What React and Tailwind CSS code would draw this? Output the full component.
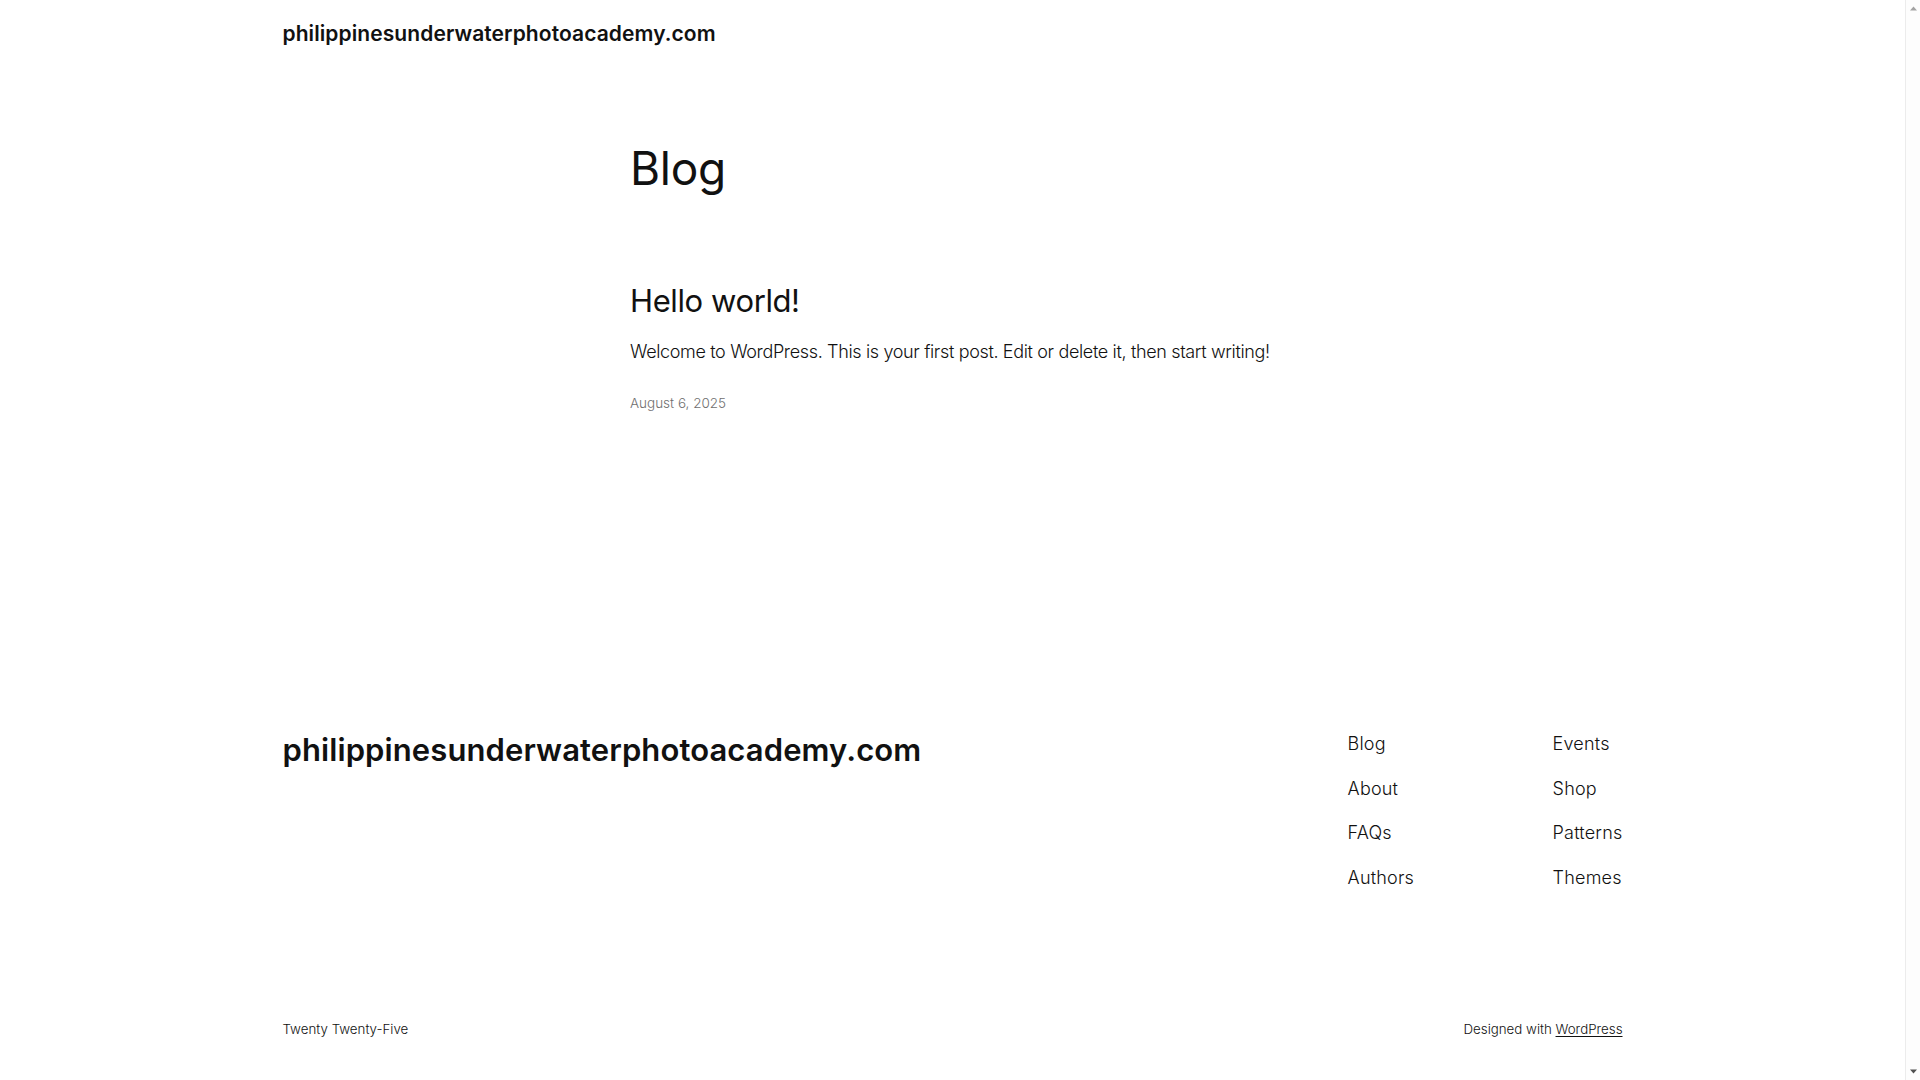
const navLeft = ['Blog', 'About', 'FAQs', 'Authors'];
const navRight = ['Events', 'Shop', 'Patterns', 'Themes'];

function FooterNav({ items, className }) {
  return (
    <ul className={`flex flex-col gap-[17.7px] ${className}`}>
      {items.map((item) => (
        <li key={item} className="text-[18px] leading-[27px] font-light tracking-[0.2px]">
          <a href="#">{item}</a>
        </li>
      ))}
    </ul>
  );
}

// the reference was shot with a classic scrollbar taking 15px on the right
function Scrollbar() {
  return (
    <div className="fixed top-0 right-0 h-screen w-[15px] bg-[#fdfdfd] border-l border-[#ececec] flex flex-col justify-between items-center">
      <svg width="9" height="15" viewBox="0 0 9 15" className="mt-[1px]">
        <path d="M1 9.5 L4.5 5.5 L8 9.5 Z" fill="#a3a3a3" />
      </svg>
      <svg width="9" height="15" viewBox="0 0 9 15" className="mb-[1px]">
        <path d="M1 5.5 L4.5 9.5 L8 5.5 Z" fill="#505050" />
      </svg>
    </div>
  );
}

export default function App() {
  return (
    <div className="min-h-screen bg-white text-[#111111] font-[family-name:Inter,sans-serif]">
      <div className="w-[1905px]">
        <header className="mx-auto w-[1340px] h-[68px] flex items-center">
          <a href="#" className="text-[21px] leading-[28px] font-semibold tracking-[0.08px]">
            philippinesunderwaterphotoacademy.com
          </a>
        </header>

        <main className="mx-auto w-[645px]">
          <h1 className="mt-[73px] text-[46px] leading-[54px] font-normal tracking-[-0.3px]">Blog</h1>

          <article className="mt-[88px]">
            <h2 className="text-[31px] leading-[36px] font-normal tracking-[-0.4px]">
              <a href="#">Hello world!</a>
            </h2>
            <p className="mt-[18.5px] text-[18px] leading-[27px] font-light tracking-[-0.35px]">
              Welcome to WordPress. This is your first post. Edit or delete it, then start writing!
            </p>
            <div className="mt-[28.5px] text-[13.5px] leading-[20px] font-light text-[#6f6f6f]">
              August 6, 2025
            </div>
          </article>
        </main>

        <footer className="mx-auto w-[1340px] mt-[317px] pb-[60px]">
          <div className="flex justify-between items-start">
            <a href="#" className="mt-[1px] text-[31px] leading-[37px] font-semibold tracking-[0.1px]">
              philippinesunderwaterphotoacademy.com
            </a>
            <nav className="flex">
              <FooterNav items={navLeft} className="w-[205px]" />
              <FooterNav items={navRight} />
            </nav>
          </div>

          <div className="mt-[129px] flex justify-between text-[13.3px] leading-[19px] font-light">
            <span>Twenty Twenty-Five</span>
            <span>
              Designed with{' '}
              <a href="#" className="underline underline-offset-2">
                WordPress
              </a>
            </span>
          </div>
        </footer>
      </div>
      <Scrollbar />
    </div>
  );
}
